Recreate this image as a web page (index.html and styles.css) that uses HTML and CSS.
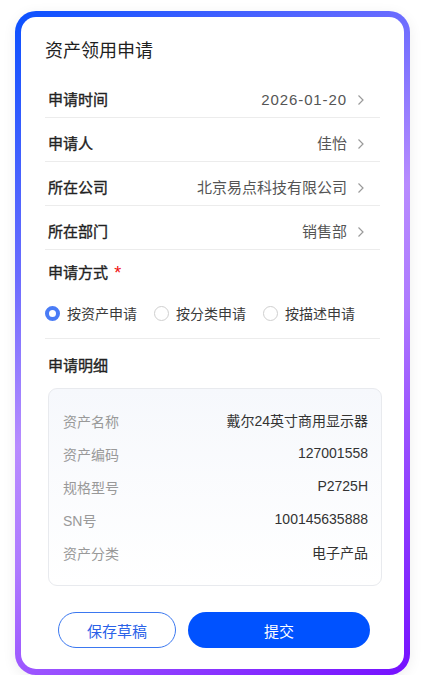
FILE: index.html
```html
<!DOCTYPE html>
<html lang="zh-CN">
<head>
<meta charset="utf-8">
<title>资产领用申请</title>
<link rel="stylesheet" href="styles.css">
</head>
<body>
<div class="frame">
  <div class="card">
    <h1 class="title">资产领用申请</h1>

    <div class="row">
      <span class="label">申请时间</span>
      <span class="value"><span class="date">2026-01-20</span><svg class="chev" width="8" height="12" viewBox="0 0 8 12"><path d="M1.5 1.5 L6 6 L1.5 10.5" fill="none" stroke="#9a9a9a" stroke-width="1.2"/></svg></span>
    </div>
    <div class="row">
      <span class="label">申请人</span>
      <span class="value">佳怡<svg class="chev" width="8" height="12" viewBox="0 0 8 12"><path d="M1.5 1.5 L6 6 L1.5 10.5" fill="none" stroke="#9a9a9a" stroke-width="1.2"/></svg></span>
    </div>
    <div class="row">
      <span class="label">所在公司</span>
      <span class="value">北京易点科技有限公司<svg class="chev" width="8" height="12" viewBox="0 0 8 12"><path d="M1.5 1.5 L6 6 L1.5 10.5" fill="none" stroke="#9a9a9a" stroke-width="1.2"/></svg></span>
    </div>
    <div class="row">
      <span class="label">所在部门</span>
      <span class="value">销售部<svg class="chev" width="8" height="12" viewBox="0 0 8 12"><path d="M1.5 1.5 L6 6 L1.5 10.5" fill="none" stroke="#9a9a9a" stroke-width="1.2"/></svg></span>
    </div>

    <div class="method">
      <div class="label method-title">申请方式 <span class="req">*</span></div>
      <div class="radios">
        <span class="radio"><span class="dot on"></span>按资产申请</span>
        <span class="radio"><span class="dot"></span>按分类申请</span>
        <span class="radio"><span class="dot"></span>按描述申请</span>
      </div>
    </div>

    <div class="label detail-title">申请明细</div>
    <div class="detail">
      <div class="drow"><span class="dlabel">资产名称</span><span class="dvalue">戴尔24英寸商用显示器</span></div>
      <div class="drow"><span class="dlabel">资产编码</span><span class="dvalue">127001558</span></div>
      <div class="drow"><span class="dlabel">规格型号</span><span class="dvalue">P2725H</span></div>
      <div class="drow"><span class="dlabel">SN号</span><span class="dvalue">100145635888</span></div>
      <div class="drow"><span class="dlabel">资产分类</span><span class="dvalue">电子产品</span></div>
    </div>

    <div class="actions">
      <button class="btn ghost">保存草稿</button>
      <button class="btn primary">提交</button>
    </div>
  </div>
</div>
</body>
</html>
```
FILE: styles.css
```css
* { box-sizing: border-box; }
body {
  margin: 0;
  background: #ffffff;
  font-family: "Liberation Sans", "Noto Sans CJK SC", sans-serif;
  color: #222;
}
.frame {
  margin: 11px 0 0 15px;
  width: 395px;
  height: 664px;
  padding: 6px;
  border-radius: 21px;
  background: linear-gradient(146deg, #0a50ff 0%, #6c6cff 29%, #b88bff 47%, #ae7aff 60%, #9c55ff 72%, #7510ff 100%);
  box-shadow: 0 3px 14px rgba(0, 0, 0, 0.07);
}
.card {
  height: 100%;
  background: #fff;
  border-radius: 15px;
  padding: 21px 24px 21px 24px;
  display: flex;
  flex-direction: column;
}
.title {
  margin: 0 0 10px 0;
  font-size: 18px;
  line-height: 26px;
  font-weight: 400;
  color: #1f1f1f;
}
.row {
  display: flex;
  justify-content: space-between;
  align-items: center;
  height: 44px;
  padding: 15px 15px 6px 3px;
  line-height: 22px;
  border-bottom: 1px solid #ececec;
}
.label {
  font-size: 15px;
  font-weight: 400;
  -webkit-text-stroke: 0.35px #222;
  color: #222;
  line-height: 22px;
}
.value {
  display: flex;
  align-items: center;
  font-size: 15px;
  color: #555;
}
.date {
  letter-spacing: 0.9px;
}
.chev {
  margin-left: 10px;
  display: block;
}
.method {
  padding: 12px 0 14px 0;
  border-bottom: 1px solid #ececec;
}
.method-title { padding-left: 3px; }
.req {
  color: #f01010;
  margin-left: 2px;
  font-size: 18px;
  -webkit-text-stroke: 0;
  vertical-align: -1px;
}
.radios {
  margin-top: 18px;
  display: flex;
  align-items: center;
  height: 22px;
}
.radio {
  display: inline-flex;
  align-items: center;
  gap: 7px;
  margin-right: 17px;
  font-size: 14px;
  color: #3a3a3a;
}
.dot {
  width: 15px;
  height: 15px;
  border-radius: 50%;
  border: 1px solid #cfcfcf;
  background: #fff;
}
.dot.on {
  border: 4.5px solid #4a7cf6;
}
.detail-title {
  margin-top: 16px;
  padding-left: 3px;
}
.detail {
  margin: 11px -2px 0 3px;
  border: 1px solid #e8eaee;
  border-radius: 9px;
  background: linear-gradient(180deg, #f6f8fc 0%, #ffffff 100%);
  padding: 14px 13px 17px 14px;
}
.drow {
  display: flex;
  justify-content: space-between;
  align-items: center;
  height: 33px;
}
.dlabel {
  font-size: 14px;
  color: #999;
  padding-top: 3px;
}
.dvalue {
  font-size: 14px;
  color: #333;
}
.actions {
  margin-top: 26px;
  padding-left: 13px;
  display: flex;
  gap: 12px;
}
.btn {
  height: 36px;
  border-radius: 18px;
  font-family: inherit;
  font-size: 15px;
  cursor: pointer;
}
.ghost {
  width: 118px;
  background: #fff;
  border: 1px solid #3b78f0;
  color: #2a62e8;
}
.primary {
  width: 182px;
  background: #0052ff;
  border: none;
  color: #fff;
}
```
